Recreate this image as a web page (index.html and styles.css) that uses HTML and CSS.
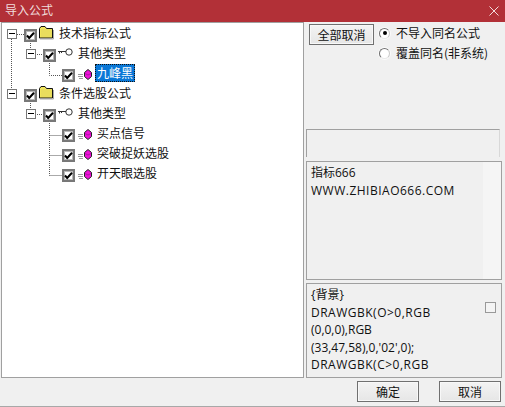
FILE: index.html
```html
<!DOCTYPE html>
<html lang="zh">
<head>
<meta charset="utf-8">
<title>导入公式</title>
<link rel="stylesheet" href="styles.css">
</head>
<body>
<svg class="defs" width="0" height="0" aria-hidden="true">
  <symbol id="check" viewBox="0 0 13 13"><path d="M3 6.500 5.200 9 10 3.800" fill="none" stroke="#000" stroke-width="2"/></symbol>
  <symbol id="minus" viewBox="0 0 8 8"><path d="M1 3.500h6" stroke="#000" stroke-width="1"/></symbol>
  <symbol id="folder" viewBox="0 0 15 14">
    <path d="M.5 12V2.500L2 .5h4l1.500 2h6V12z" fill="#f2e65c" stroke="#111"/>
    <path d="M2 4h11M2 6h11M2 8h11M2 10h11" stroke="#d8cc60" stroke-width=".7"/>
    <path d="M1 13h13.500V4" fill="none" stroke="#aaa"/>
  </symbol>
  <symbol id="key" viewBox="0 0 15 10">
    <circle cx="11" cy="5" r="3.200" fill="#fff" stroke="#333" stroke-width="1"/>
    <path d="M0 4.500h8M1.500 4.500v2M3.500 4.500v1.500" stroke="#333" stroke-width="1" fill="none"/>
  </symbol>
  <symbol id="gem" viewBox="0 0 15 12">
    <path d="M0 5.500h5M0 7.500h5M1 9.500h4" stroke="#999" stroke-width="1"/>
    <path d="M10 .5l3.500 3v4l-3.500 3-3.500-3v-4z" fill="#ee10d8" stroke="#222" stroke-width="1"/>
    <path d="M7 4.500 10 6l3-1.500" fill="none" stroke="#801080" stroke-width=".6"/>
  </symbol>
</svg>
<div class="window">
  <header class="titlebar">
    <span class="title">导入公式</span>
    <svg class="close" width="10" height="10" viewBox="0 0 10 10"><path d="M.5.5l9 9M9.500.5l-9 9" stroke="#f2dcdc" stroke-width="1"/></svg>
  </header>
  <main class="content">
    <section class="tree">
      <svg class="connectors" width="100" height="180" viewBox="0 0 100 180">
        <path d="M11.500 16V67M17 11.500h7M30.500 20v7M35 31.500h8M49.500 40v12.500H62M30.500 80v7M35 91.500h8M49.500 100v52.500M49.500 112.500H62M49.500 132.500H62M49.500 152.500H62" fill="none" stroke="#555" stroke-dasharray="1 1"/>
      </svg>
      <div class="row l0"><span class="exp"><svg><use href="#minus"/></svg></span><span class="cb"><svg><use href="#check"/></svg></span><svg class="ic folder"><use href="#folder"/></svg><span class="lbl">技术指标公式</span></div>
      <div class="row l1"><span class="exp"><svg><use href="#minus"/></svg></span><span class="cb"><svg><use href="#check"/></svg></span><svg class="ic key"><use href="#key"/></svg><span class="lbl">其他类型</span></div>
      <div class="row l2"><span class="cb"><svg><use href="#check"/></svg></span><svg class="ic gem"><use href="#gem"/></svg><span class="lbl sel">九峰黑</span></div>
      <div class="row l0"><span class="exp"><svg><use href="#minus"/></svg></span><span class="cb"><svg><use href="#check"/></svg></span><svg class="ic folder"><use href="#folder"/></svg><span class="lbl">条件选股公式</span></div>
      <div class="row l1"><span class="exp"><svg><use href="#minus"/></svg></span><span class="cb"><svg><use href="#check"/></svg></span><svg class="ic key"><use href="#key"/></svg><span class="lbl">其他类型</span></div>
      <div class="row l2"><span class="cb"><svg><use href="#check"/></svg></span><svg class="ic gem"><use href="#gem"/></svg><span class="lbl">买点信号</span></div>
      <div class="row l2"><span class="cb"><svg><use href="#check"/></svg></span><svg class="ic gem"><use href="#gem"/></svg><span class="lbl">突破捉妖选股</span></div>
      <div class="row l2"><span class="cb"><svg><use href="#check"/></svg></span><svg class="ic gem"><use href="#gem"/></svg><span class="lbl">开天眼选股</span></div>
    </section>
    <aside class="side">
      <div class="options">
        <button class="btn cancel-all">全部取消</button>
        <div class="radios">
          <div class="radio-row"><span class="radio on"></span><span>不导入同名公式</span></div>
          <div class="radio-row"><span class="radio"></span><span>覆盖同名(非系统)</span></div>
        </div>
      </div>
      <div class="group"></div>
      <div class="memo memo-a">指标666<br><span class="wide">WWW.ZHIBIAO666.COM</span></div>
      <div class="memo memo-b">
        <div class="memo-text">{背景}<br><span class="wide">DRAWGBK(O&gt;0,RGB</span><br>(0,0,0),RGB<br>(33,47,58),0,'02',0);<br><span class="wide">DRAWGBK(C&gt;0,RGB</span></div>
        <span class="small-box"></span>
      </div>
    </aside>
  </main>
  <footer class="actions">
    <button class="btn action">确定</button>
    <button class="btn action">取消</button>
  </footer>
</div>
</body>
</html>
```

FILE: styles.css
```css
* { box-sizing: border-box; }
html, body { margin: 0; padding: 0; }
body {
  width: 505px;
  height: 407px;
  overflow: hidden;
  background: #f0f0f0;
  font: 12px/20px "Noto Sans CJK SC", "Noto Sans", sans-serif;
  color: #111;
}
.defs { position: absolute; }
.window {
  width: 505px;
  height: 407px;
  display: flex;
  flex-direction: column;
  border-bottom: 1px solid #a8a8a8;
}
.titlebar {
  height: 22px;
  background: #b23037;
  color: #f0dcdc;
  display: flex;
  align-items: center;
  justify-content: space-between;
  padding: 0 6px 2px 5px;
  flex: none;
}
.title { font-size: 12px; }
.close { display: block; margin-top: 2px; }
.content {
  flex: none;
  height: 356px;
  display: flex;
}
.tree {
  position: relative;
  width: 303px;
  margin-left: 1px;
  flex: none;
  background: #fff;
  border: 1px solid #a0a0a0;
}
.connectors {
  position: absolute;
  left: -2px;
  top: 0;
}
.row {
  height: 20px;
  display: flex;
  align-items: flex-start;
}
.l0 { padding-left: 5px; }
.l1 { padding-left: 24px; }
.l2 { padding-left: 60px; }
.exp {
  width: 10px;
  height: 10px;
  margin-top: 6px;
  margin-right: 7px;
  border: 1px solid #777;
  background: #fff;
  flex: none;
  position: relative;
  z-index: 1;
}
.exp svg { display: block; width: 8px; height: 8px; }
.cb {
  width: 13px;
  height: 13px;
  margin-top: 6px;
  border: 2px solid #787878;
  box-shadow: inset 0 0 0 1px #b8b8b8;
  background: #fff;
  flex: none;
  position: relative;
  z-index: 1;
}
.cb svg { display: block; width: 13px; height: 13px; margin: -2px; }
.ic { flex: none; position: relative; z-index: 1; }
.folder { width: 15px; height: 14px; margin: 3px 0 0 2px; }
.key { width: 15px; height: 10px; margin: 4px 0 0 2px; }
.gem { width: 15px; height: 12px; margin: 6px 0 0 3px; }
.lbl { padding: 0 2px; height: 18px; line-height: 20px; }
.l2 .lbl { margin-left: 2px; }
.l0 .lbl, .l1 .lbl { margin-left: 3px; }
.sel {
  background: #0a78d7;
  color: #fff;
  outline: 1px dotted #111;
  outline-offset: -1px;
  margin-top: 1px;
  line-height: 18px;
}
.side {
  flex: none;
  width: 200px;
  padding: 2px 0 0 1px;
  display: flex;
  flex-direction: column;
  align-items: flex-start;
}
.options { display: flex; height: 105px; }
.btn {
  font: 12px/1 "Noto Sans CJK SC", "Noto Sans", sans-serif;
  color: #111;
  background: linear-gradient(#f3f3f3, #e6e6e6);
  border: 1px solid #707070;
  box-shadow: inset 0 0 0 1px #f8f8f8;
  padding: 0;
}
.cancel-all { width: 65px; height: 21px; margin-left: 4px; }
.radios { margin-left: 5px; }
.radio-row { height: 20px; display: flex; align-items: center; gap: 6px; margin-top: -1px; }
.radio-row + .radio-row { margin-top: 0; }
.radio {
  width: 11px;
  height: 11px;
  border-radius: 50%;
  border: 1px solid;
  border-color: #707070 #c8c8c8 #e8e8e8 #707070;
  background: #fff;
  box-shadow: 0 0 0 1px #fafafa;
  position: relative;
  flex: none;
}
.radio.on::after {
  content: "";
  position: absolute;
  left: 2.500px;
  top: 2.500px;
  width: 4px;
  height: 4px;
  border-radius: 50%;
  background: #000;
}
.group {
  width: 194px;
  height: 28px;
  margin-left: 1px;
  border: 1px solid #a0a0a0;
  border-bottom: 0;
  border-right-color: #d8d8d8;
}
.memo {
  width: 196px;
  margin-left: 1px;
  border: 1px solid #a0a0a0;
  background: #f0f0f0;
  padding: 2px 4px;
  font-family: "Open Sans", "Noto Sans CJK SC", sans-serif;
  line-height: 17.500px;
}
.wide { letter-spacing: .5px; }
.memo-a { height: 119px; margin-top: 4px; background: linear-gradient(to right, #f0f0f0 176px, #f5f5f5 176px); }
.memo-b {
  height: 95px;
  margin-top: 3px;
  display: flex;
  justify-content: space-between;
  overflow: hidden;
}
.memo-text { white-space: nowrap; }
.small-box {
  width: 11px;
  height: 11px;
  margin: 16px 1px 0 0;
  border: 1px solid #999;
  background: #f4f4f4;
  flex: none;
}
.actions {
  flex: none;
  height: 28px;
  display: flex;
  justify-content: flex-end;
  gap: 20px;
  padding: 3px 4px 0 0;
}
.action { width: 62px; height: 21px; }
```
